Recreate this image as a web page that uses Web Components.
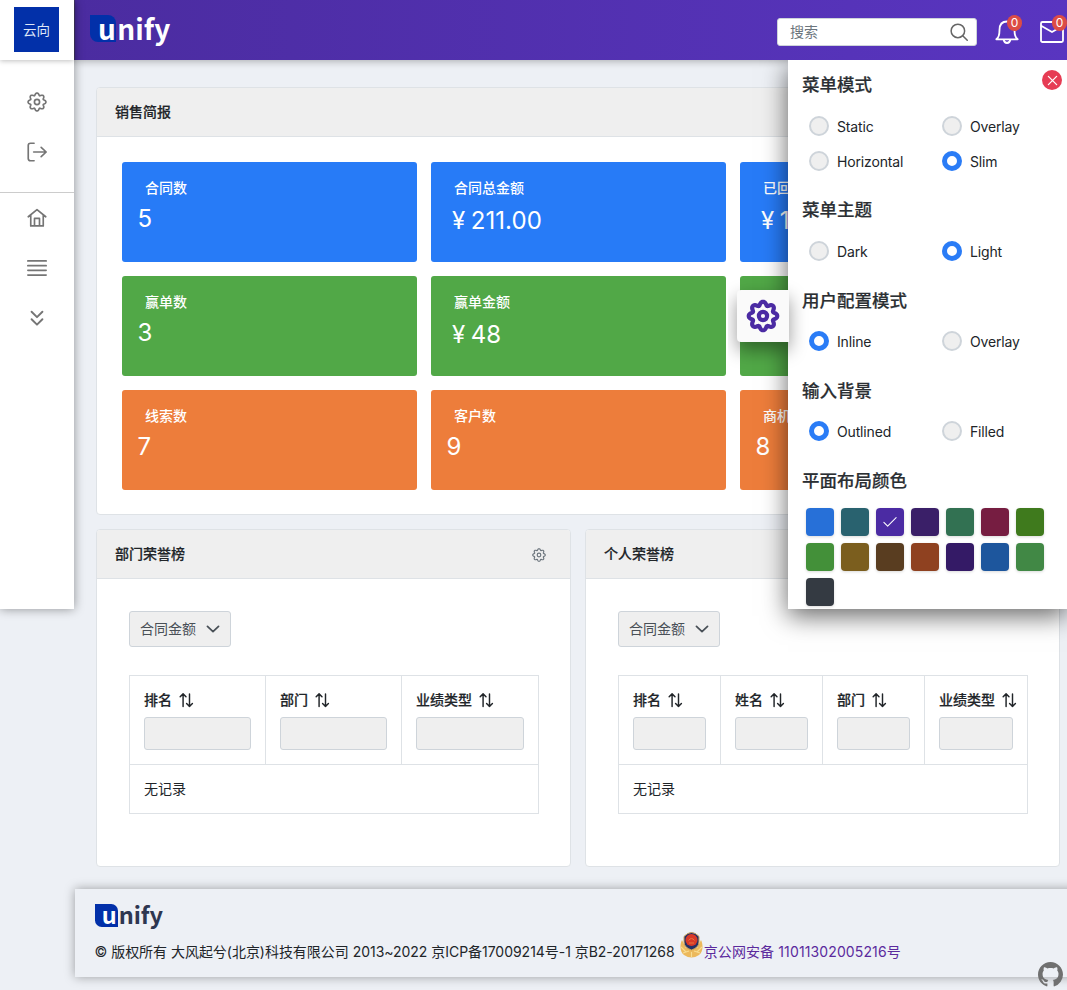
<!DOCTYPE html>
<html lang="zh-CN">
<head>
<meta charset="utf-8">
<title>unify</title>
<style>
html,body{margin:0;padding:0}
body{width:1067px;height:990px;overflow:hidden;background:#edf0f5;color:#212529;font:14px/21px Inter,"Noto Sans CJK SC",sans-serif}
</style>
</head>
<body>
<app-shell></app-shell>
<script>
const define = (name, css, html) => customElements.define(name, class extends HTMLElement {
  constructor() {
    super();
    const t = document.createElement('template');
    t.innerHTML = `<style>*{box-sizing:border-box}${css}</style>${typeof html === 'function' ? html(this) : html}`;
    this.attachShadow({mode: 'open'}).append(t.content.cloneNode(true));
  }
});

// Eight-lobed cog outline with rounded teeth
const cog = (() => {
  let d = '';
  for (let i = 0; i < 160; i++) {
    const a = i / 160 * Math.PI * 2, r = 9.55 + 1.3 * Math.cos(8 * a) - .15 * Math.cos(16 * a);
    d += (i ? 'L' : 'M') + (12 + r * Math.cos(a)).toFixed(2) + ' ' + (12 + r * Math.sin(a)).toFixed(2);
  }
  return `<path d="${d}Z"/><circle cx="12" cy="12" r="3.1"/>`;
})();
const icons = {
  cog,
  exit: '<path d="M8.5 1.500H4.2Q1.500 1.500 1.500 4.200V19.800Q1.500 22.500 4.200 22.500H8.500M8 12H22.500M17 6.500L23 12L17 17.500"/>',
  home: '<path d="M1.500 10.500L12 2L22.500 10.500M4.500 8.500V21.500H19.500V8.500M9 21.500V12.500H15V21.500"/>',
  list: '<path d="M1 3.500H23M1 9.200H23M1 14.800H23M1 20.500H23"/>',
  down2: '<path d="M5.500 4.500L12 11L18.500 4.500M5.500 13.500L12 20L18.500 13.500"/>',
  search: '<circle cx="10.500" cy="10.500" r="9"/><path d="M17 17L23 23"/>',
  bell: '<path d="M1.300 19.300C4.300 17.500 4.500 14.500 4.500 10C4.500 4.500 7.500 1.500 12 1.500S19.500 4.500 19.500 10C19.500 14.500 19.700 17.500 22.700 19.300ZM8.500 19.500Q9.300 23 12 23T15.500 19.500"/>',
  mail: '<rect x="1" y="2" width="22" height="20" rx="1.500"/><path d="M1.500 6L12 12L22.500 6"/>',
  times: '<path d="M3 3L21 21M21 3L3 21"/>',
  check: '<path d="M1.500 12.500L8 19L22.500 4.500"/>',
  chevron: '<path d="M2.500 7.500L12 16.500L21.500 7.500"/>',
  sort: '<path d="M7 23V1.500M2 6.500L7 1.500L12 6.500M18 1.500V23M13 18L18 23L23 18"/>'
};
define('ui-icon', ':host{display:block;flex:none;width:var(--s,20px);height:var(--s,20px)}svg{display:block;width:100%;height:100%;overflow:visible}',
  h => `<svg viewBox="0 0 24 24" fill="none" stroke="currentColor" stroke-width="${h.getAttribute('w') || 1.8}" stroke-linecap="round" stroke-linejoin="round">${icons[h.getAttribute('name')]}</svg>`);

define('brand-logo', `
:host{display:flex;align-items:flex-start;height:var(--b,27px);color:#fff;font:700 var(--f,28px)/1 "Noto Sans CJK SC",sans-serif}
.u{width:var(--b,27px);height:var(--b,27px);background:#0230a9;border-radius:0 calc(var(--b,27px)*.3) 0 calc(var(--b,27px)*.3);padding-left:calc(var(--b,27px)*.3)}
.n{padding-left:calc(var(--b,27px)*.05);color:var(--c,#fff)}
span{line-height:calc(var(--b,27px) - 1px)}`, '<span class="u">u</span><span class="n">nify</span>');

define('side-bar', `
:host{display:block;width:74px;height:609px;flex:none;background:#fff;box-shadow:0 0 10px rgba(0,0,0,.4);position:relative;z-index:3;color:#757575}
.top{height:60px;padding:7px 14px;box-shadow:0 1px 5px rgba(0,0,0,.25)}
.mark{width:45px;height:45px;background:#0230a9;color:#dfe6f7;display:grid;place-items:center;font:400 13.500px/45px "Noto Sans CJK SC",sans-serif}
.g{padding:17px 0 15px;border-bottom:1px solid #ccc}.i{height:50px;display:grid;place-items:center}`,
`<div class="top"><div class="mark">云向</div></div>
<div class="g"><div class="i"><ui-icon name="cog" w="2"></ui-icon></div><div class="i"><ui-icon name="exit" w="2"></ui-icon></div></div>
<div class="i"><ui-icon name="home" w="2"></ui-icon></div><div class="i"><ui-icon name="list" w="2"></ui-icon></div><div class="i"><ui-icon name="down2" w="2.300"></ui-icon></div>`);

define('notice-icon', `
:host{display:block;position:relative;width:24px;height:24px;flex:none;color:#fff}
ui-icon{--s:24px}b{position:absolute;left:12px;top:-5px;width:15px;height:16px;border-radius:8px;background:#dc4c46;font:400 12px/16px Inter,sans-serif;text-align:center}`,
h => `<ui-icon name="${h.getAttribute('name')}" w="1.800"></ui-icon><b>0</b>`);

define('top-bar', `
:host{display:flex;align-items:center;height:60px;width:993px;padding-left:15px;background:linear-gradient(90deg,#4b2ca0,#5935c0);box-shadow:0 1px 8px rgba(0,0,0,.3);border-left:1px solid #4b3f70}
brand-logo{margin-top:-3px}
.s{margin-left:607px;width:200px;height:28px;margin-top:3px;background:#fff;border:1px solid #ced4da;border-radius:3px;padding:0 8px 0 12px;display:flex;align-items:center;justify-content:space-between;color:#6c757d;flex:none}
.s span{margin-top:-1px}
notice-icon{margin:3px 0 0 18px}notice-icon+notice-icon{margin-left:21px}`,
`<brand-logo style="width:80px"></brand-logo><div class="s"><span>搜索</span><ui-icon name="search" w="2" style="--s:18px;color:#666"></ui-icon></div>
<notice-icon name="bell"></notice-icon><notice-icon name="mail"></notice-icon>`);

define('ui-card', `
:host{display:block;background:#fff;border:1px solid #dee2e6;border-radius:4px;overflow:hidden}
header{height:49px;background:#efefef;border-bottom:1px solid #dee2e6;padding:0 24px 0 18px;display:flex;align-items:center;justify-content:space-between;font-weight:500;color:#212529}
header span{margin-top:-2px;-webkit-text-stroke:.2px}
ui-icon{--s:14px;margin-top:1px;color:#6c757d}`,
h => `<header><span>${h.getAttribute('heading')}</span>${h.hasAttribute('cog') ? '<ui-icon name="cog" w="2"></ui-icon>' : ''}</header><slot></slot>`);

define('stat-tile', `
:host{display:block;height:100px;border-radius:3px;color:#fff;background:var(--bg)}
.t{padding:16px 0 0 23px;font-weight:500;line-height:20px}
.v{padding-left:15.500px;font-size:24px;line-height:36px;margin-top:3px;white-space:nowrap;letter-spacing:.1px;word-spacing:-1.500px}
.v.y{padding-left:21px;margin-top:5px}`,
h => { const y = h.getAttribute('value').startsWith('¥'); return `<div class="t">${h.getAttribute('label')}</div><div class="v ${y ? 'y' : ''}">${h.getAttribute('value')}</div>`; });

define('rank-table', `
:host{display:block;padding:32px 32px 0}
.d{width:102px;height:36px;border:1px solid #ced4da;border-radius:3px;background:#efefef;color:#495057;display:flex;align-items:center;padding:0 10px;justify-content:space-between}
.d span{margin-top:-2px}
.t{margin-top:28px;width:410px;border:1px solid #dee2e6}
.h{display:grid;grid-auto-flow:column;grid-auto-columns:1fr;height:89px;border-bottom:1px solid #dee2e6}
.c{padding:13px 14px 0;min-width:0;border-right:1px solid #dee2e6}.c:last-child{border-right:0}
.l{display:flex;gap:7px;align-items:center;font-weight:500;white-space:nowrap;height:21px;-webkit-text-stroke:.2px}
.f{height:33px;margin-top:7px;background:#efefef;border:1px solid #ced4da;border-radius:3px}
.e{height:48px;padding:0 14px;line-height:48px}`,
h => `<div class="d"><span>合同金额</span><ui-icon name="chevron" w="3" style="--s:14px"></ui-icon></div><div class="t"><div class="h">${h.getAttribute('cols').split(',').map(c => `<div class="c"><div class="l"><span>${c}</span><ui-icon name="sort" w="2.500" style="--s:14px"></ui-icon></div><div class="f"></div></div>`).join('')}</div><div class="e">无记录</div></div>`);

define('page-footer', `
:host{display:block;margin:22px -10px 0 1px;height:88px;padding:15px 20px 0;background:#edf0f5;box-shadow:0 0 10px rgba(0,0,0,.35)}
brand-logo{--b:22.500px;--f:23.500px;--c:#2d3650}
.l{display:flex;align-items:center;height:26px;margin-top:12px;white-space:nowrap;letter-spacing:-.03px}
.l span{margin-left:-.5px}
svg{margin:-14px 1px 0 5px;flex:none}a{color:#5b2a9d;letter-spacing:.12px}`,
`<brand-logo></brand-logo><div class="l"><span>© 版权所有 大风起兮(北京)科技有限公司 2013~2022 京ICP备17009214号-1 京B2-20171268</span>
<svg width="23" height="26" viewBox="0 0 23 26"><path d="M2 8C-.5 13 0 20 4 23Q11.500 28 19 23C23 20 23.500 13 21 8L17 16H6Z" fill="#ecb95c"/><path d="M1 15L6 20M22 15L17 20M3 21L9 19M20 21L14 19M11.500 20V25" stroke="#f8dc90" stroke-width="1.100"/><path d="M4 4.500Q11.500-3.500 19 4.500V10Q19 15.500 11.500 18Q4 15.500 4 10Z" fill="#243067" stroke="#c9a25a"/><circle cx="11.500" cy="8" r="6" fill="#d93a28"/><path d="M8.500 8.500Q11.500 4.500 14.500 8.500M9 11H14" stroke="#e8743f" fill="none"/></svg><a>京公网安备 11011302005216号</a></div>`);

define('radio-option', `
:host{display:flex;align-items:center;height:35px;width:133px;flex:none}
i{width:20px;height:20px;border-radius:50%;background:#efefef;border:2px solid #ced4da;margin-right:8px}
:host([on]) i{background:#fff;border:5px solid #2a7cf6}span{letter-spacing:-.15px;padding-top:1px}`, '<i></i><span><slot></slot></span>');

define('option-group', `
:host{display:block;margin-bottom:19.300px}h3{margin:0 0 11px;font-size:17.500px;line-height:25px;font-weight:500;color:#2b2f33;-webkit-text-stroke:.2px}
div{display:flex;flex-wrap:wrap;padding-left:7px;width:275px}`,
h => `<h3>${h.getAttribute('heading')}</h3><div><slot></slot></div>`);

const swatches = '#2770d8,#29626f,#4b2ba3,#3a1f68,#327152,#761d41,#3f7a1d,#439039,#7b5e1e,#593d20,#8f4120,#341a66,#1d569d,#418845,#343a42'.split(',');
define('config-panel', `
:host{display:block;position:absolute;left:788px;top:60px;width:279px;height:549px;padding:12px 0 0 14px;background:#fff;box-shadow:0 7px 24px rgba(0,0,0,.6);z-index:4;clip-path:inset(0 0 -50px -60px)}
.b{position:absolute;left:-51px;top:230px;width:52px;height:52px;background:#fafafa;border-radius:4px 0 0 4px;display:grid;place-items:center;color:#4b2ba3;box-shadow:0 8px 18px rgba(0,0,0,.4)}
.b ui-icon{--s:32px}
.x{position:absolute;left:254px;top:10px;width:20px;height:20px;border-radius:50%;background:#e63c54;color:#fff;display:grid;place-items:center}
.c{display:grid;grid-template-columns:repeat(7,28px);gap:7px;margin-left:-3px}
.c b{height:28px;border-radius:4px;display:grid;place-items:center;color:#fff;box-shadow:0 1px 3px rgba(0,0,0,.15)}`,
`<div class="b"><ui-icon name="cog" w="3.100"></ui-icon></div><div class="x"><ui-icon name="times" w="2.800" style="--s:11px"></ui-icon></div>
<option-group heading="菜单模式"><radio-option>Static</radio-option><radio-option>Overlay</radio-option><radio-option>Horizontal</radio-option><radio-option on>Slim</radio-option></option-group>
<option-group heading="菜单主题"><radio-option>Dark</radio-option><radio-option on>Light</radio-option></option-group>
<option-group heading="用户配置模式"><radio-option on>Inline</radio-option><radio-option>Overlay</radio-option></option-group>
<option-group heading="输入背景"><radio-option on>Outlined</radio-option><radio-option>Filled</radio-option></option-group>
<option-group heading="平面布局颜色"><div class="c" style="margin-top:3.800px">${swatches.map((c, i) => `<b style="background:${c}">${i === 2 ? '<ui-icon name="check" w="1.800" style="--s:14px"></ui-icon>' : ''}</b>`).join('')}</div></option-group>`);

const tile = (c, l, v) => `<stat-tile style="--bg:${c}" label="${l}" value="${v}"></stat-tile>`;
const B = '#277bf7', G = '#51a847', O = '#ed7d3b';
define('app-shell', `
:host{display:flex;align-items:flex-start;position:relative;width:1067px;height:990px;overflow:hidden}
main{width:993px;flex:none}
.p{padding:27px 7px 0 22px;display:grid;grid-template-columns:475px 475px;gap:14px}
.wide{grid-column:1/3;height:428px}.half{height:338px}
.tiles{display:grid;grid-template-columns:repeat(3,1fr);gap:14px;padding:25px 24px 25px 25px}
.gh{position:absolute;left:1038px;top:962px;z-index:5}`,
`<side-bar></side-bar><main><top-bar></top-bar><div class="p">
<ui-card class="wide" heading="销售简报"><div class="tiles">${tile(B, '合同数', '5')}${tile(B, '合同总金额', '¥ 211.00')}${tile(B, '已回', '¥ 1')}${tile(G, '赢单数', '3')}${tile(G, '赢单金额', '¥ 48')}${tile(G, '', '')}${tile(O, '线索数', '7')}${tile(O, '客户数', '9')}${tile(O, '商机', '8')}</div></ui-card>
<ui-card class="half" heading="部门荣誉榜" cog><rank-table cols="排名,部门,业绩类型"></rank-table></ui-card>
<ui-card class="half" heading="个人荣誉榜"><rank-table cols="排名,姓名,部门,业绩类型"></rank-table></ui-card>
</div><page-footer></page-footer></main><config-panel></config-panel>
<svg class="gh" width="25" height="25" viewBox="0 0 16 16" fill="#707070"><path d="M8 0C3.580 0 0 3.580 0 8c0 3.540 2.290 6.530 5.470 7.590.4.070.55-.17.55-.38 0-.19-.010-.82-.010-1.490-2.010.37-2.530-.49-2.690-.94-.09-.23-.48-.94-.82-1.130-.28-.15-.68-.52-.010-.53.63-.010 1.080.58 1.230.82.72 1.210 1.870.87 2.330.66.070-.52.28-.87.51-1.070-1.780-.2-3.640-.89-3.640-3.950 0-.87.310-1.590.82-2.150-.08-.2-.36-1.020.08-2.120 0 0 .67-.21 2.200.82.64-.18 1.320-.27 2-.27s1.360.09 2 .27c1.530-1.040 2.200-.82 2.200-.82.44 1.100.16 1.920.08 2.120.51.56.82 1.270.82 2.150 0 3.070-1.870 3.750-3.650 3.950.29.25.54.73.54 1.480 0 1.070-.010 1.930-.010 2.200 0 .21.15.46.55.38A8.010 8.010 0 0 0 16 8c0-4.420-3.580-8-8-8z"/></svg>`);
</script>
</body>
</html>
